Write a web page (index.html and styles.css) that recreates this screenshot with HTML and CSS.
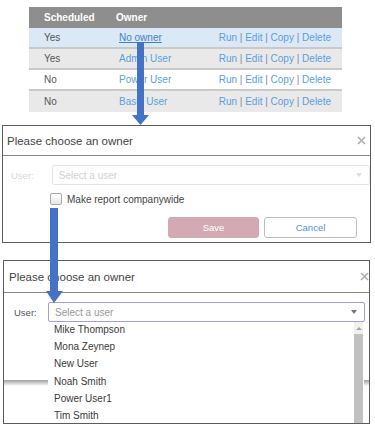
FILE: index.html
```html
<!DOCTYPE html>
<html lang="en">
<head>
    <meta charset="UTF-8">
    <title>Choose an owner</title>
    <link rel="stylesheet" href="styles.css">
</head>
<body>
    <div class="page">
        <table class="reports">
            <tr>
                <th class="col-sched">Scheduled</th>
                <th class="col-owner">Owner</th>
                <th></th>
            </tr>
            <tr class="row-active">
                <td class="col-sched">Yes</td>
                <td class="col-owner"><a class="owner current">No owner</a></td>
                <td class="actions"><a>Run</a> | <a>Edit</a> | <a>Copy</a> | <a>Delete</a></td>
            </tr>
            <tr class="row-alt">
                <td class="col-sched">Yes</td>
                <td class="col-owner"><a class="owner">Admin User</a></td>
                <td class="actions"><a>Run</a> | <a>Edit</a> | <a>Copy</a> | <a>Delete</a></td>
            </tr>
            <tr>
                <td class="col-sched">No</td>
                <td class="col-owner"><a class="owner">Power User</a></td>
                <td class="actions"><a>Run</a> | <a>Edit</a> | <a>Copy</a> | <a>Delete</a></td>
            </tr>
            <tr class="row-alt last">
                <td class="col-sched">No</td>
                <td class="col-owner"><a class="owner">Basic User</a></td>
                <td class="actions"><a>Run</a> | <a>Edit</a> | <a>Copy</a> | <a>Delete</a></td>
            </tr>
        </table>

        <!-- Dialog before a user is picked -->
        <div class="dialog dialog-first">
            <div class="dialog-head">
                <span class="dialog-title">Please choose an owner</span>
                <svg class="close" width="9" height="9" viewBox="0 0 9 9"><path d="M1 1L8 8M8 1L1 8" stroke="#b0b0b0" stroke-width="1.6"/></svg>
            </div>
            <div class="dialog-body">
                <div class="field disabled">
                    <label>User:</label>
                    <div class="select">
                        <span>Select a user</span>
                        <span class="caret"></span>
                    </div>
                </div>
                <div class="check-row">
                    <span class="checkbox"></span>
                    <span>Make report companywide</span>
                </div>
                <div class="buttons">
                    <button class="btn btn-save">Save</button>
                    <button class="btn btn-cancel">Cancel</button>
                </div>
            </div>
        </div>

        <!-- Dialog with the user list open -->
        <div class="dialog dialog-second">
            <div class="dialog-head">
                <span class="dialog-title">Please choose an owner</span>
                <svg class="close" width="9" height="9" viewBox="0 0 9 9"><path d="M1 1L8 8M8 1L1 8" stroke="#b0b0b0" stroke-width="1.6"/></svg>
            </div>
            <div class="dialog-body">
                <div class="field">
                    <label>User:</label>
                    <div class="select focused">
                        <span>Select a user</span>
                        <span class="caret"></span>
                        <div class="menu">
                            <ul>
                                <li>Mike Thompson</li>
                                <li>Mona Zeynep</li>
                                <li>New User</li>
                                <li>Noah Smith</li>
                                <li>Power User1</li>
                                <li>Tim Smith</li>
                            </ul>
                            <div class="scrollbar">
                                <span class="scroll-up"></span>
                                <span class="thumb"></span>
                            </div>
                        </div>
                    </div>
                </div>
                <div class="footer-shade"></div>
            </div>
        </div>

        <svg class="arrow arrow-one" width="19" height="84" viewBox="0 0 19 84">
            <rect x="6" y="0" width="7" height="74" fill="#4472c4"/>
            <polygon points="1,73 18,73 9.5,83" fill="#4472c4"/>
        </svg>
        <svg class="arrow arrow-two" width="19" height="96" viewBox="0 0 19 96">
            <rect x="5" y="0" width="8" height="84" fill="#4472c4"/>
            <polygon points="1,83 18,83 9,95" fill="#4472c4"/>
        </svg>
    </div>
</body>
</html>
```

FILE: styles.css
```css
body {
    margin: 0;
    background: #fff;
    font-family: "Liberation Sans", Arial, sans-serif;
}
.page {
    position: relative;
    width: 375px;
    height: 430px;
    overflow: hidden;
    padding-top: 7px;
    box-sizing: border-box;
}
.reports {
    margin-left: 29px;
    width: 313px;
    border-collapse: collapse;
    font-size: 10px;
}
.reports th {
    height: 21px;
    padding: 0;
    background: #8e8e8e;
    color: #fff;
    text-align: left;
    font-weight: bold;
}
.reports td {
    height: 19px;
    padding: 0;
    color: #555;
    border-bottom: 2px solid #c9c9c9;
}
.reports tr.last td { border-bottom: none; height: 21px; }
.row-active td { background: #dbe8f5; }
.row-alt td { background: #e9e9e9; }
.reports .col-sched {
    width: 72px;
    padding-left: 15px;
}
.reports .col-owner { width: 100px; }
.owner {
    color: #5a9fdc;
    padding-left: 3px;
}
.owner.current {
    color: #3c82c8;
    text-decoration: underline;
}
.actions {
    text-align: right;
    padding-right: 11px !important;
    color: #7a8a9a !important;
}
.actions a { color: #5a9fdc; }

.dialog {
    position: relative;
    border: 1px solid #5c5c5c;
    background: #fff;
    overflow: hidden;
}
.dialog-first {
    margin: 13px 0 0 2px;
    width: 367px;
    height: 116px;
}
.dialog-second {
    margin: 17px 0 0 3px;
    width: 365px;
    height: 162px;
}
.dialog-head {
    display: flex;
    align-items: center;
    justify-content: space-between;
    height: 29px;
    padding: 0 4px 0 4px;
    border-bottom: 1px solid #8a8a8a;
}
.dialog-second .dialog-head { height: 31px; padding-left: 5px; padding-right: 0; }
.dialog-title {
    font-size: 11.5px;
    color: #444;
}
.dialog-body { padding-top: 9px; }
.field {
    display: flex;
    align-items: center;
    font-size: 10px;
}
.field label {
    width: 41px;
    padding-left: 8px;
    color: #555;
    font-size: 9.5px;
}
.dialog-second .field label { width: 34px; padding-left: 10px; }
.select {
    position: relative;
    width: 305px;
    height: 18px;
    border: 1px solid #e4e4e4;
    border-radius: 2px;
    display: flex;
    align-items: center;
    justify-content: space-between;
    padding: 0 7px 0 6px;
    color: #d2d2d2;
}
.dialog-second .select {
    width: 302px;
    color: #999;
}
.select.focused { border-color: #a69ddb; }
.caret {
    width: 0;
    height: 0;
    border-left: 3.5px solid transparent;
    border-right: 3.5px solid transparent;
    border-top: 4px solid #ddd;
}
.focused .caret { border-top-color: #777; }
.disabled label { color: #d8d8d8; }

.check-row {
    display: flex;
    align-items: center;
    gap: 5px;
    margin: 8px 0 0 47px;
    font-size: 10px;
    color: #444;
}
.checkbox {
    width: 10px;
    height: 10px;
    border: 1px solid #aaa;
    border-radius: 2px;
    background: linear-gradient(#fff, #e6e6e6);
}
.buttons {
    display: flex;
    justify-content: flex-end;
    gap: 5px;
    margin-top: 12px;
    padding-right: 13px;
}
.btn {
    height: 21px;
    border-radius: 3px;
    font-family: "Liberation Sans", Arial, sans-serif;
    font-size: 9.5px;
    padding: 0;
}
.btn-save {
    width: 91px;
    background: #d4a9b4;
    border: 1px solid #d4a9b4;
    color: #fff;
}
.btn-cancel {
    width: 93px;
    background: #fff;
    border: 1px solid #bdbdbd;
    color: #4f92d6;
}

.menu {
    position: absolute;
    top: 19px;
    left: -1px;
    width: 316px;
    height: 120px;
    background: #fff;
    display: flex;
    z-index: 2;
}
.menu ul {
    list-style: none;
    margin: -1px 0 0 0;
    padding: 0 0 0 6px;
    flex: 1;
    font-size: 10px;
    color: #3a3a3a;
}
.menu li {
    height: 17.2px;
    line-height: 17.2px;
}
.scrollbar {
    width: 9px;
    margin-right: 1px;
    background: #f1f1f1;
    display: flex;
    flex-direction: column;
    align-items: center;
}
.scroll-up {
    margin-top: 5px;
    width: 0;
    height: 0;
    border-left: 3px solid transparent;
    border-right: 3px solid transparent;
    border-bottom: 3px solid #a3a3a3;
}
.thumb {
    margin-top: 4px;
    width: 9px;
    flex: 1;
    background: #c1c1c1;
}
.footer-shade {
    margin-top: 58px;
    height: 6px;
    background: linear-gradient(#9f9f9f, #fff);
}

.arrow {
    position: absolute;
    z-index: 5;
}
.arrow-one { left: 131px; top: 42px; }
.arrow-two { left: 45px; top: 208px; }
```
